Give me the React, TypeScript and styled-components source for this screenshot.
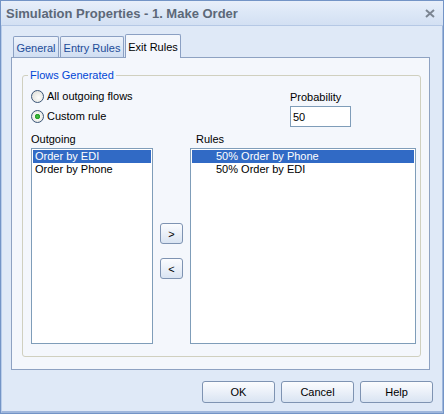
import styled, {createGlobalStyle} from 'styled-components';

const GlobalStyle = createGlobalStyle`
   html, body {
      margin: 0;
      padding: 0;
      background: #ffffff;
   }
   * {
      box-sizing: border-box;
   }
   body {
      font-family: 'Liberation Sans', Arial, sans-serif;
      font-size: 11px;
      color: #000;
   }
`;

const Window = styled.div`
   width: 444px;
   height: 414px;
   display: flex;
   flex-direction: column;
   border: 1px solid #7394c6;
   background: #dfe9f7;
`;

const TitleBar = styled.div`
   flex: none;
   height: 25px;
   display: flex;
   align-items: center;
   justify-content: space-between;
   padding: 0 8px 0 5px;
   background: linear-gradient(#e8effa, #dde8f7 45%, #d3e0f3);
   border-bottom: 1px solid #b5c8e5;
`;

const Title = styled.span`
   font-size: 13px;
   font-weight: bold;
   color: #5c6878;
`;

const CloseIcon = styled.svg`
   width: 10px;
   height: 9px;
   margin-top: 1px;
`;

const Body = styled.div`
   flex: 1;
   display: flex;
   flex-direction: column;
   padding: 8px 9px 0 9px;
   border-left: 1px solid #b9cdea;
   border-right: 1px solid #9fb7dc;
   border-bottom: 2px solid #9fb7dc;
`;

const TabStrip = styled.div`
   height: 23px;
   display: flex;
   align-items: flex-end;
   gap: 1px;
   padding-left: 2px;
`;

const Tab = styled.div<{$active?: boolean; $w: number}>`
   position: relative;
   z-index: ${p => (p.$active ? 1 : 0)};
   width: ${p => p.$w}px;
   height: ${p => (p.$active ? 24 : 21)}px;
   margin-bottom: ${p => (p.$active ? -1 : 0)}px;
   display: flex;
   align-items: center;
   justify-content: center;
   padding-top: ${p => (p.$active ? 0 : 1)}px;
   border: 1px solid #8ba0c3;
   border-bottom: none;
   border-radius: 2px 2px 0 0;
   color: ${p => (p.$active ? '#000' : '#1d4c99')};
   background: ${p =>
      p.$active ? '#f4f7fc' : 'linear-gradient(#eef3fb, #d0def2)'};
`;

const Panel = styled.div`
   width: 419px;
   height: 313px;
   border: 1px solid #8ea2c2;
   background: #f4f7fc;
   padding: 11px 8px 0 10px;
`;

const GroupBox = styled.fieldset`
   margin: 0;
   padding: 4px 4px 12px 8px;
   border: 1px solid #d0d0bf;
   border-radius: 3px;
   min-inline-size: 0;
`;

const Legend = styled.legend`
   margin-left: -3px;
   padding: 0 2px;
   line-height: 13px;
   color: #0046d5;
`;

const Content = styled.div`
   display: grid;
   grid-template-columns: 122px 23px 226px;
   column-gap: 7px;
`;

const Options = styled.div`
   grid-column: 1 / 3;
   display: flex;
   flex-direction: column;
`;

const RadioRow = styled.label`
   height: 20px;
   display: flex;
   align-items: center;
   gap: 3px;
`;

const RadioCircle = styled.span<{$checked?: boolean}>`
   width: 13px;
   height: 13px;
   border-radius: 50%;
   border: 1px solid #3a5577;
   background: ${p =>
      p.$checked
         ? 'radial-gradient(circle, #4cc04c 0, #27a127 2.2px, #f6f6f3 3px, #dcdcd6 100%)'
         : 'radial-gradient(circle at 60% 60%, #fdfdfb 0, #e4e4de 70%, #cfcfc8 100%)'};
`;

const Probability = styled.div`
   margin: 5px 0 0 100px;
   display: flex;
   flex-direction: column;
   gap: 2px;
`;

const Label = styled.div<{$indent?: number}>`
   line-height: 13px;
   padding-left: ${p => p.$indent ?? 0}px;
`;

const TextBox = styled.div`
   width: 61px;
   height: 21px;
   border: 1px solid #7f9db9;
   background: #fff;
   padding-left: 2px;
   display: flex;
   align-items: center;
`;

const ColumnLabel = styled(Label)`
   margin-top: 6px;
   margin-bottom: 2px;
`;

const ListBox = styled.div`
   height: 196px;
   border: 1px solid #7f9db9;
   background: #fff;
   padding: 1px;
`;

const ListItem = styled.div<{$selected?: boolean; $indent: number}>`
   height: 13px;
   line-height: 13px;
   padding-left: ${p => p.$indent}px;
   white-space: nowrap;
   color: ${p => (p.$selected ? '#fff' : '#000')};
   background: ${p => (p.$selected ? '#316ac5' : 'transparent')};
`;

const MoveButtons = styled.div`
   display: flex;
   flex-direction: column;
   gap: 14px;
   padding-top: 75px;
`;

const SmallButton = styled.button`
   width: 23px;
   height: 21px;
   padding: 0;
   border: 1px solid #7e93b2;
   border-radius: 3px;
   background: linear-gradient(#fbfcfe, #e9eff8 55%, #d9e4f2);
   font: inherit;
   color: #000;
`;

const ButtonRow = styled.div`
   display: flex;
   justify-content: flex-end;
   gap: 6px;
   margin-top: 11px;
`;

const DialogButton = styled.button`
   width: 73px;
   height: 22px;
   padding: 0;
   border: 1px solid #7e93b2;
   border-radius: 3px;
   background: linear-gradient(#fbfcfe, #e9eff8 55%, #d9e4f2);
   font: inherit;
   color: #000;
`;

const outgoing = ['Order by EDI', 'Order by Phone'];
const rules = ['50% Order by Phone', '50% Order by EDI'];

const App = () => {
   return (
      <>
         <GlobalStyle />
         <Window>
            <TitleBar>
               <Title>Simulation Properties - 1. Make Order</Title>
               <CloseIcon viewBox='0 0 10 9'>
                  <path
                     d='M1 1 L9 8 M9 1 L1 8'
                     stroke='#7b8592'
                     strokeWidth='2'
                     fill='none'
                  />
               </CloseIcon>
            </TitleBar>
            <Body>
               <TabStrip>
                  <Tab $w={46}>General</Tab>
                  <Tab $w={64}>Entry Rules</Tab>
                  <Tab $w={56} $active>
                     Exit Rules
                  </Tab>
               </TabStrip>
               <Panel>
                  <GroupBox>
                     <Legend>Flows Generated</Legend>
                     <Content>
                        <Options>
                           <RadioRow>
                              <RadioCircle />
                              All outgoing flows
                           </RadioRow>
                           <RadioRow>
                              <RadioCircle $checked />
                              Custom rule
                           </RadioRow>
                        </Options>
                        <Probability>
                           <Label>Probability</Label>
                           <TextBox>50</TextBox>
                        </Probability>
                        <ColumnLabel>Outgoing</ColumnLabel>
                        <div />
                        <ColumnLabel $indent={6}>Rules</ColumnLabel>
                        <ListBox>
                           {outgoing.map((item, i) => (
                              <ListItem key={item} $indent={2} $selected={i === 0}>
                                 {item}
                              </ListItem>
                           ))}
                        </ListBox>
                        <MoveButtons>
                           <SmallButton type='button'>&gt;</SmallButton>
                           <SmallButton type='button'>&lt;</SmallButton>
                        </MoveButtons>
                        <ListBox>
                           {rules.map((item, i) => (
                              <ListItem key={item} $indent={24} $selected={i === 0}>
                                 {item}
                              </ListItem>
                           ))}
                        </ListBox>
                     </Content>
                  </GroupBox>
               </Panel>
               <ButtonRow>
                  <DialogButton type='button'>OK</DialogButton>
                  <DialogButton type='button'>Cancel</DialogButton>
                  <DialogButton type='button'>Help</DialogButton>
               </ButtonRow>
            </Body>
         </Window>
      </>
   );
};

export default App;
